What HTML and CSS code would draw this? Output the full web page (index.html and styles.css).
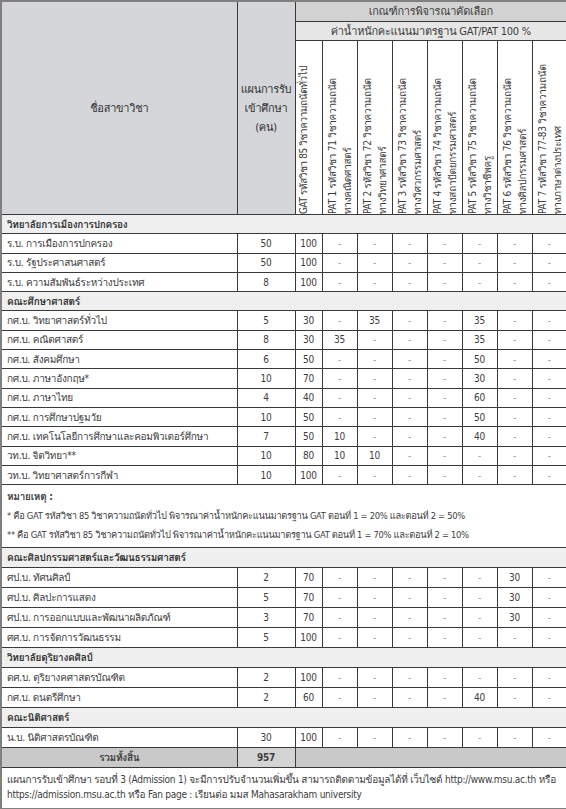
FILE: index.html
```html
<!DOCTYPE html>
<html lang="th">
<head>
<meta charset="utf-8">
<title>แผนการรับเข้าศึกษา</title>
<link rel="stylesheet" href="styles.css">
</head>
<body>
<table class="plan">
  <colgroup>
    <col class="c-name"><col class="c-count"><col class="c-gat">
    <col class="c-pat"><col class="c-pat"><col class="c-pat"><col class="c-pat"><col class="c-pat"><col class="c-pat"><col class="c-pat">
  </colgroup>
  <thead>
    <tr class="h1">
      <th rowspan="3" class="hd-left">ชื่อสาขาวิชา</th>
      <th rowspan="3" class="hd-left">แผนการรับ<br>เข้าศึกษา<br>(คน)</th>
      <th colspan="8" class="hd-crit">เกณฑ์การพิจารณาคัดเลือก</th>
    </tr>
    <tr class="h2">
      <th colspan="8" class="hd-weight">ค่าน้ำหนักคะแนนมาตรฐาน GAT/PAT 100 %</th>
    </tr>
    <tr class="h3">
      <th class="hd-rot"><div class="rot one">GAT รหัสวิชา 85 วิชาความถนัดทั่วไป</div></th>
      <th class="hd-rot"><div class="rot">PAT 1 รหัสวิชา 71 วิชาความถนัด<br>ทางคณิตศาสตร์</div></th>
      <th class="hd-rot"><div class="rot">PAT 2 รหัสวิชา 72 วิชาความถนัด<br>ทางวิทยาศาสตร์</div></th>
      <th class="hd-rot"><div class="rot">PAT 3 รหัสวิชา 73 วิชาความถนัด<br>ทางวิศวกรรมศาสตร์</div></th>
      <th class="hd-rot"><div class="rot">PAT 4 รหัสวิชา 74 วิชาความถนัด<br>ทางสถาปัตยกรรมศาสตร์</div></th>
      <th class="hd-rot"><div class="rot">PAT 5 รหัสวิชา 75 วิชาความถนัด<br>ทางวิชาชีพครู</div></th>
      <th class="hd-rot"><div class="rot">PAT 6 รหัสวิชา 76 วิชาความถนัด<br>ทางศิลปกรรมศาสตร์</div></th>
      <th class="hd-rot"><div class="rot">PAT 7 รหัสวิชา 77-83 วิชาความถนัด<br>ทางภาษาต่างประเทศ</div></th>
    </tr>
  </thead>
  <tbody class="top">
    <tr class="sec"><td colspan="10">วิทยาลัยการเมืองการปกครอง</td></tr>
    <tr><td class="nm">ร.บ. การเมืองการปกครอง</td><td class="ct">50</td><td class="gt">100</td><td class="d">-</td><td class="d">-</td><td class="d">-</td><td class="d">-</td><td class="d">-</td><td class="d">-</td><td class="d">-</td></tr>
    <tr><td class="nm">ร.บ. รัฐประศาสนศาสตร์</td><td class="ct">50</td><td class="gt">100</td><td class="d">-</td><td class="d">-</td><td class="d">-</td><td class="d">-</td><td class="d">-</td><td class="d">-</td><td class="d">-</td></tr>
    <tr><td class="nm">ร.บ. ความสัมพันธ์ระหว่างประเทศ</td><td class="ct">8</td><td class="gt">100</td><td class="d">-</td><td class="d">-</td><td class="d">-</td><td class="d">-</td><td class="d">-</td><td class="d">-</td><td class="d">-</td></tr>
    <tr class="sec"><td colspan="10">คณะศึกษาศาสตร์</td></tr>
    <tr><td class="nm">กศ.บ. วิทยาศาสตร์ทั่วไป</td><td class="ct">5</td><td class="gt">30</td><td class="d">-</td><td class="v">35</td><td class="d">-</td><td class="d">-</td><td class="v">35</td><td class="d">-</td><td class="d">-</td></tr>
    <tr><td class="nm">กศ.บ. คณิตศาสตร์</td><td class="ct">8</td><td class="gt">30</td><td class="v">35</td><td class="d">-</td><td class="d">-</td><td class="d">-</td><td class="v">35</td><td class="d">-</td><td class="d">-</td></tr>
    <tr><td class="nm">กศ.บ. สังคมศึกษา</td><td class="ct">6</td><td class="gt">50</td><td class="d">-</td><td class="d">-</td><td class="d">-</td><td class="d">-</td><td class="v">50</td><td class="d">-</td><td class="d">-</td></tr>
    <tr><td class="nm">กศ.บ. ภาษาอังกฤษ*</td><td class="ct">10</td><td class="gt">70</td><td class="d">-</td><td class="d">-</td><td class="d">-</td><td class="d">-</td><td class="v">30</td><td class="d">-</td><td class="d">-</td></tr>
    <tr><td class="nm">กศ.บ. ภาษาไทย</td><td class="ct">4</td><td class="gt">40</td><td class="d">-</td><td class="d">-</td><td class="d">-</td><td class="d">-</td><td class="v">60</td><td class="d">-</td><td class="d">-</td></tr>
    <tr><td class="nm">กศ.บ. การศึกษาปฐมวัย</td><td class="ct">10</td><td class="gt">50</td><td class="d">-</td><td class="d">-</td><td class="d">-</td><td class="d">-</td><td class="v">50</td><td class="d">-</td><td class="d">-</td></tr>
    <tr><td class="nm">กศ.บ. เทคโนโลยีการศึกษาและคอมพิวเตอร์ศึกษา</td><td class="ct">7</td><td class="gt">50</td><td class="v">10</td><td class="d">-</td><td class="d">-</td><td class="d">-</td><td class="v">40</td><td class="d">-</td><td class="d">-</td></tr>
    <tr><td class="nm">วท.บ. จิตวิทยา**</td><td class="ct">10</td><td class="gt">80</td><td class="v">10</td><td class="v">10</td><td class="d">-</td><td class="d">-</td><td class="d">-</td><td class="d">-</td><td class="d">-</td></tr>
    <tr><td class="nm">วท.บ. วิทยาศาสตร์การกีฬา</td><td class="ct">10</td><td class="gt">100</td><td class="d">-</td><td class="d">-</td><td class="d">-</td><td class="d">-</td><td class="d">-</td><td class="d">-</td><td class="d">-</td></tr>
  </tbody>
  <tbody class="notes">
    <tr><td colspan="10">
      <div class="note-title">หมายเหตุ :</div>
      <div class="note-line">* คือ GAT รหัสวิชา 85 วิชาความถนัดทั่วไป พิจารณาค่าน้ำหนักคะแนนมาตรฐาน GAT ตอนที่ 1 = 20% และตอนที่ 2 = 50%</div>
      <div class="note-line">** คือ GAT รหัสวิชา 85 วิชาความถนัดทั่วไป พิจารณาค่าน้ำหนักคะแนนมาตรฐาน GAT ตอนที่ 1 = 70% และตอนที่ 2 = 10%</div>
    </td></tr>
  </tbody>
  <tbody class="bottom">
    <tr class="sec"><td colspan="10">คณะศิลปกรรมศาสตร์และวัฒนธรรมศาสตร์</td></tr>
    <tr><td class="nm">ศป.บ. ทัศนศิลป์</td><td class="ct">2</td><td class="gt">70</td><td class="d">-</td><td class="d">-</td><td class="d">-</td><td class="d">-</td><td class="d">-</td><td class="v">30</td><td class="d">-</td></tr>
    <tr><td class="nm">ศป.บ. ศิลปะการแสดง</td><td class="ct">5</td><td class="gt">70</td><td class="d">-</td><td class="d">-</td><td class="d">-</td><td class="d">-</td><td class="d">-</td><td class="v">30</td><td class="d">-</td></tr>
    <tr><td class="nm">ศป.บ. การออกแบบและพัฒนาผลิตภัณฑ์</td><td class="ct">3</td><td class="gt">70</td><td class="d">-</td><td class="d">-</td><td class="d">-</td><td class="d">-</td><td class="d">-</td><td class="v">30</td><td class="d">-</td></tr>
    <tr><td class="nm">ศศ.บ. การจัดการวัฒนธรรม</td><td class="ct">5</td><td class="gt">100</td><td class="d">-</td><td class="d">-</td><td class="d">-</td><td class="d">-</td><td class="d">-</td><td class="d">-</td><td class="d">-</td></tr>
    <tr class="sec"><td colspan="10">วิทยาลัยดุริยางคศิลป์</td></tr>
    <tr><td class="nm">ดศ.บ. ดุริยางคศาสตรบัณฑิต</td><td class="ct">2</td><td class="gt">100</td><td class="d">-</td><td class="d">-</td><td class="d">-</td><td class="d">-</td><td class="d">-</td><td class="d">-</td><td class="d">-</td></tr>
    <tr><td class="nm">กศ.บ. ดนตรีศึกษา</td><td class="ct">2</td><td class="gt">60</td><td class="d">-</td><td class="d">-</td><td class="d">-</td><td class="d">-</td><td class="v">40</td><td class="d">-</td><td class="d">-</td></tr>
    <tr class="sec"><td colspan="10">คณะนิติศาสตร์</td></tr>
    <tr><td class="nm">น.บ. นิติศาสตรบัณฑิต</td><td class="ct">30</td><td class="gt">100</td><td class="d">-</td><td class="d">-</td><td class="d">-</td><td class="d">-</td><td class="d">-</td><td class="d">-</td><td class="d">-</td></tr>
    <tr class="total"><td class="tl">รวมทั้งสิ้น</td><td class="tv">957</td><td colspan="8"></td></tr>
  </tbody>
  <tfoot>
    <tr><td colspan="10" class="foot">แผนการรับเข้าศึกษา รอบที่ 3 (Admission 1) จะมีการปรับจำนวนเพิ่มขึ้น สามารถติดตามข้อมูลได้ที่ เว็บไซต์ http://www.msu.ac.th หรือ<br>https://admission.msu.ac.th หรือ Fan page : เรียนต่อ มมส Mahasarakham university</td></tr>
  </tfoot>
</table>
</body>
</html>
```
FILE: styles.css
```css
html, body {
  margin: 0;
  padding: 0;
  background: #ffffff;
}
body {
  font-family: "DejaVu Sans Condensed", "Loma", "Noto Sans Thai Looped", "Noto Sans Thai", sans-serif;
  font-size: 10px;
  letter-spacing: -0.25px;
  color: #3d3d3d;
}
.plan {
  border-collapse: collapse;
  table-layout: fixed;
  width: 566px;
  border: 2px solid #808080;
}
.c-name { width: 236px; }
.c-count { width: 58px; }
.c-gat { width: 27px; }
.c-pat { width: 35px; }
.plan th, .plan td {
  border: 1px solid #3a3a3a;
  padding: 0;
  font-weight: normal;
  line-height: 15px;
}
.hd-left {
  background: #d4d6d9;
  text-align: center;
  vertical-align: middle;
  color: #333;
  font-size: 11px;
}
.hd-left { line-height: 19px !important; }
.hd-crit {
  background: #d2d2d2;
  height: 19px;
  text-align: center;
  font-size: 11px;
}
.hd-weight {
  background: #e6e6e6;
  height: 18px;
  text-align: center;
  font-size: 11px;
}
.h3 { height: 174px; }
.hd-rot {
  background: #ffffff;
  vertical-align: bottom;
  text-align: left;
  overflow: hidden;
}
.rot {
  writing-mode: vertical-rl;
  transform: rotate(180deg);
  height: 166px;
  padding: 0 0 6px 0;
  white-space: nowrap;
  line-height: 15px;
  text-align: left;
  margin-left: 2px;
  overflow: hidden;
}
.rot.one { margin-left: 0; letter-spacing: -0.4px; }
.top tr { height: 19.3px; }
.bottom tr { height: 20px; }
.sec td {
  background: #efefef;
  font-weight: bold;
  padding-left: 5px;
  color: #333;
}
.nm { padding-left: 5px !important; white-space: nowrap; overflow: hidden; }
.ct, .gt, .v, .d { text-align: center; }
.d { color: #9a9a9a; }
.notes td {
  padding: 2px 5px 3px 5px;
  line-height: 19px;
  font-size: 9.3px;
  letter-spacing: -0.3px;
}
.note-title { font-weight: bold; font-size: 10px; letter-spacing: -0.25px; }
.total td {
  background: #c9c9c9;
  font-weight: bold;
  height: 17px;
}
.total .tl { text-align: center; }
.total .tv { text-align: center; background: #d4d4d4; }
.foot {
  padding: 4px 5px 6px 5px !important;
  line-height: 16px;
  white-space: nowrap;
}
```
